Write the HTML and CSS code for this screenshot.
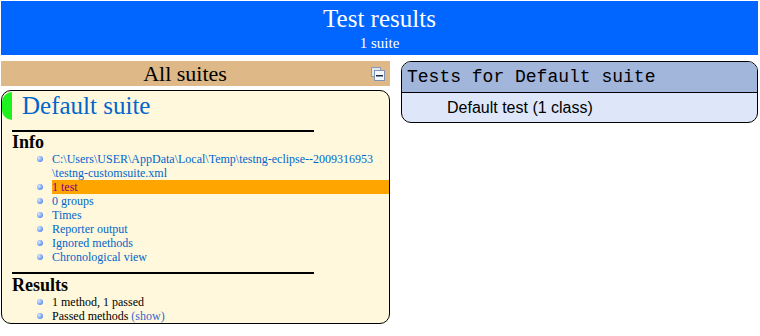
FILE: index.html
```html
<!DOCTYPE html>
<html lang="en">
<head>
    <meta charset="UTF-8">
    <title>TestNG Report</title>
    <link rel="stylesheet" href="styles.css">
</head>
<body>
    <div class="top-banner">
        <div class="banner-title">Test results</div>
        <div class="banner-sub">1 suite</div>
    </div>
    <div class="main">
        <div class="navigator">
            <div class="all-suites">
                <span class="all-suites-text">All suites</span>
                <svg class="collapse-icon" width="14" height="14" viewBox="0 0 14 14">
                    <rect x="0.5" y="0.5" width="9" height="9" fill="#dfe6f0" stroke="#8a9bb8"/>
                    <rect x="3.5" y="3.5" width="10" height="10" fill="#f4f7fb" stroke="#7f93b5"/>
                    <rect x="5" y="8" width="7" height="1.5" fill="#1a2a4a"/>
                </svg>
            </div>
            <div class="suite">
                <div class="suite-header">Default suite</div>
                <div class="suite-section">
                    <div class="section-title">Info</div>
                    <ul class="nav-list">
                        <li><a href="#">C:\Users\USER\AppData\Local\Temp\testng-eclipse--2009316953 \testng-customsuite.xml</a></li>
                        <li class="selected"><a href="#">1 test</a></li>
                        <li><a href="#">0 groups</a></li>
                        <li><a href="#">Times</a></li>
                        <li><a href="#">Reporter output</a></li>
                        <li><a href="#">Ignored methods</a></li>
                        <li><a href="#">Chronological view</a></li>
                    </ul>
                </div>
                <div class="suite-section results">
                    <div class="section-title">Results</div>
                    <ul class="nav-list">
                        <li>1 method, 1 passed</li>
                        <li>Passed methods <a href="#" class="show">(show)</a></li>
                    </ul>
                </div>
            </div>
        </div>
        <div class="panel">
            <div class="panel-title">Tests for Default suite</div>
            <div class="panel-body">Default test (1 class)</div>
        </div>
    </div>
</body>
</html>
```

FILE: styles.css
```css
body {
    margin: 1px 2px 0 1px;
    font-family: "Liberation Serif", "Times New Roman", serif;
    background: #fff;
}
.top-banner {
    background-color: #0066ff;
    color: white;
    text-align: center;
    height: 54px;
    padding-top: 3px;
    box-sizing: border-box;
}
.banner-title {
    font-size: 25px;
    line-height: 30px;
}
.banner-sub {
    font-size: 15px;
    line-height: 18px;
}
.main {
    display: flex;
    align-items: flex-start;
    margin-top: 6px;
}
.navigator {
    width: 389px;
    flex-shrink: 0;
}
.all-suites {
    display: flex;
    align-items: center;
    background-color: #deb887;
    height: 25px;
    font-size: 22px;
    padding-right: 5px;
}
.all-suites-text {
    flex: 1;
    text-align: center;
    line-height: 25px;
    padding-left: 3px;
}
.collapse-icon {
    margin-left: 5px;
}
.suite {
    margin-top: 4px;
    border: 1px solid black;
    border-radius: 10px;
    background-color: #fff8dc;
    overflow: hidden;
}
.suite-header {
    margin-top: 1px;
    border-left: 10px solid #1ef21e;
    border-radius: 10px 0 0 10px;
    height: 28px;
    line-height: 28px;
    padding-left: 10px;
    font-size: 25px;
    color: #0066cc;
}
.suite-section {
    margin-top: 10px;
}
.section-title {
    margin-left: 10px;
    width: 302px;
    border-top: 2px solid black;
    font-size: 18px;
    font-weight: bold;
    line-height: 19px;
    padding-top: 1px;
}
.suite-section.results {
    margin-top: 8px;
}
.results .section-title {
    line-height: 20px;
}
.nav-list {
    list-style: none;
    margin: 0;
    padding: 0 0 0 50px;
    font-size: 12px;
    line-height: 14px;
}
.nav-list li {
    position: relative;
}
.nav-list li::before {
    content: "";
    position: absolute;
    left: -15px;
    top: 4px;
    width: 6px;
    height: 6px;
    border-radius: 50%;
    background: radial-gradient(circle at 35% 35%, #dbe8ff, #5f90f2 70%);
}
.nav-list a {
    color: #0066cc;
    text-decoration: none;
}
.nav-list li.selected {
    background-color: #ffa500;
}
.nav-list li.selected a {
    color: #800080;
}
.nav-list a.show {
    color: #3366cc;
}
.panel {
    margin-left: 11px;
    width: 356px;
    border: 1px solid black;
    border-radius: 10px;
    overflow: hidden;
    background-color: #dee7f9;
}
.panel-title {
    background-color: #a2b5da;
    border-bottom: 1px solid black;
    font-family: "Liberation Mono", "Courier New", monospace;
    font-size: 18px;
    height: 30px;
    line-height: 30px;
    padding-left: 5px;
}
.panel-body {
    font-family: "Liberation Sans", Arial, sans-serif;
    font-size: 16px;
    height: 29px;
    line-height: 29px;
    padding-left: 45px;
}
```
